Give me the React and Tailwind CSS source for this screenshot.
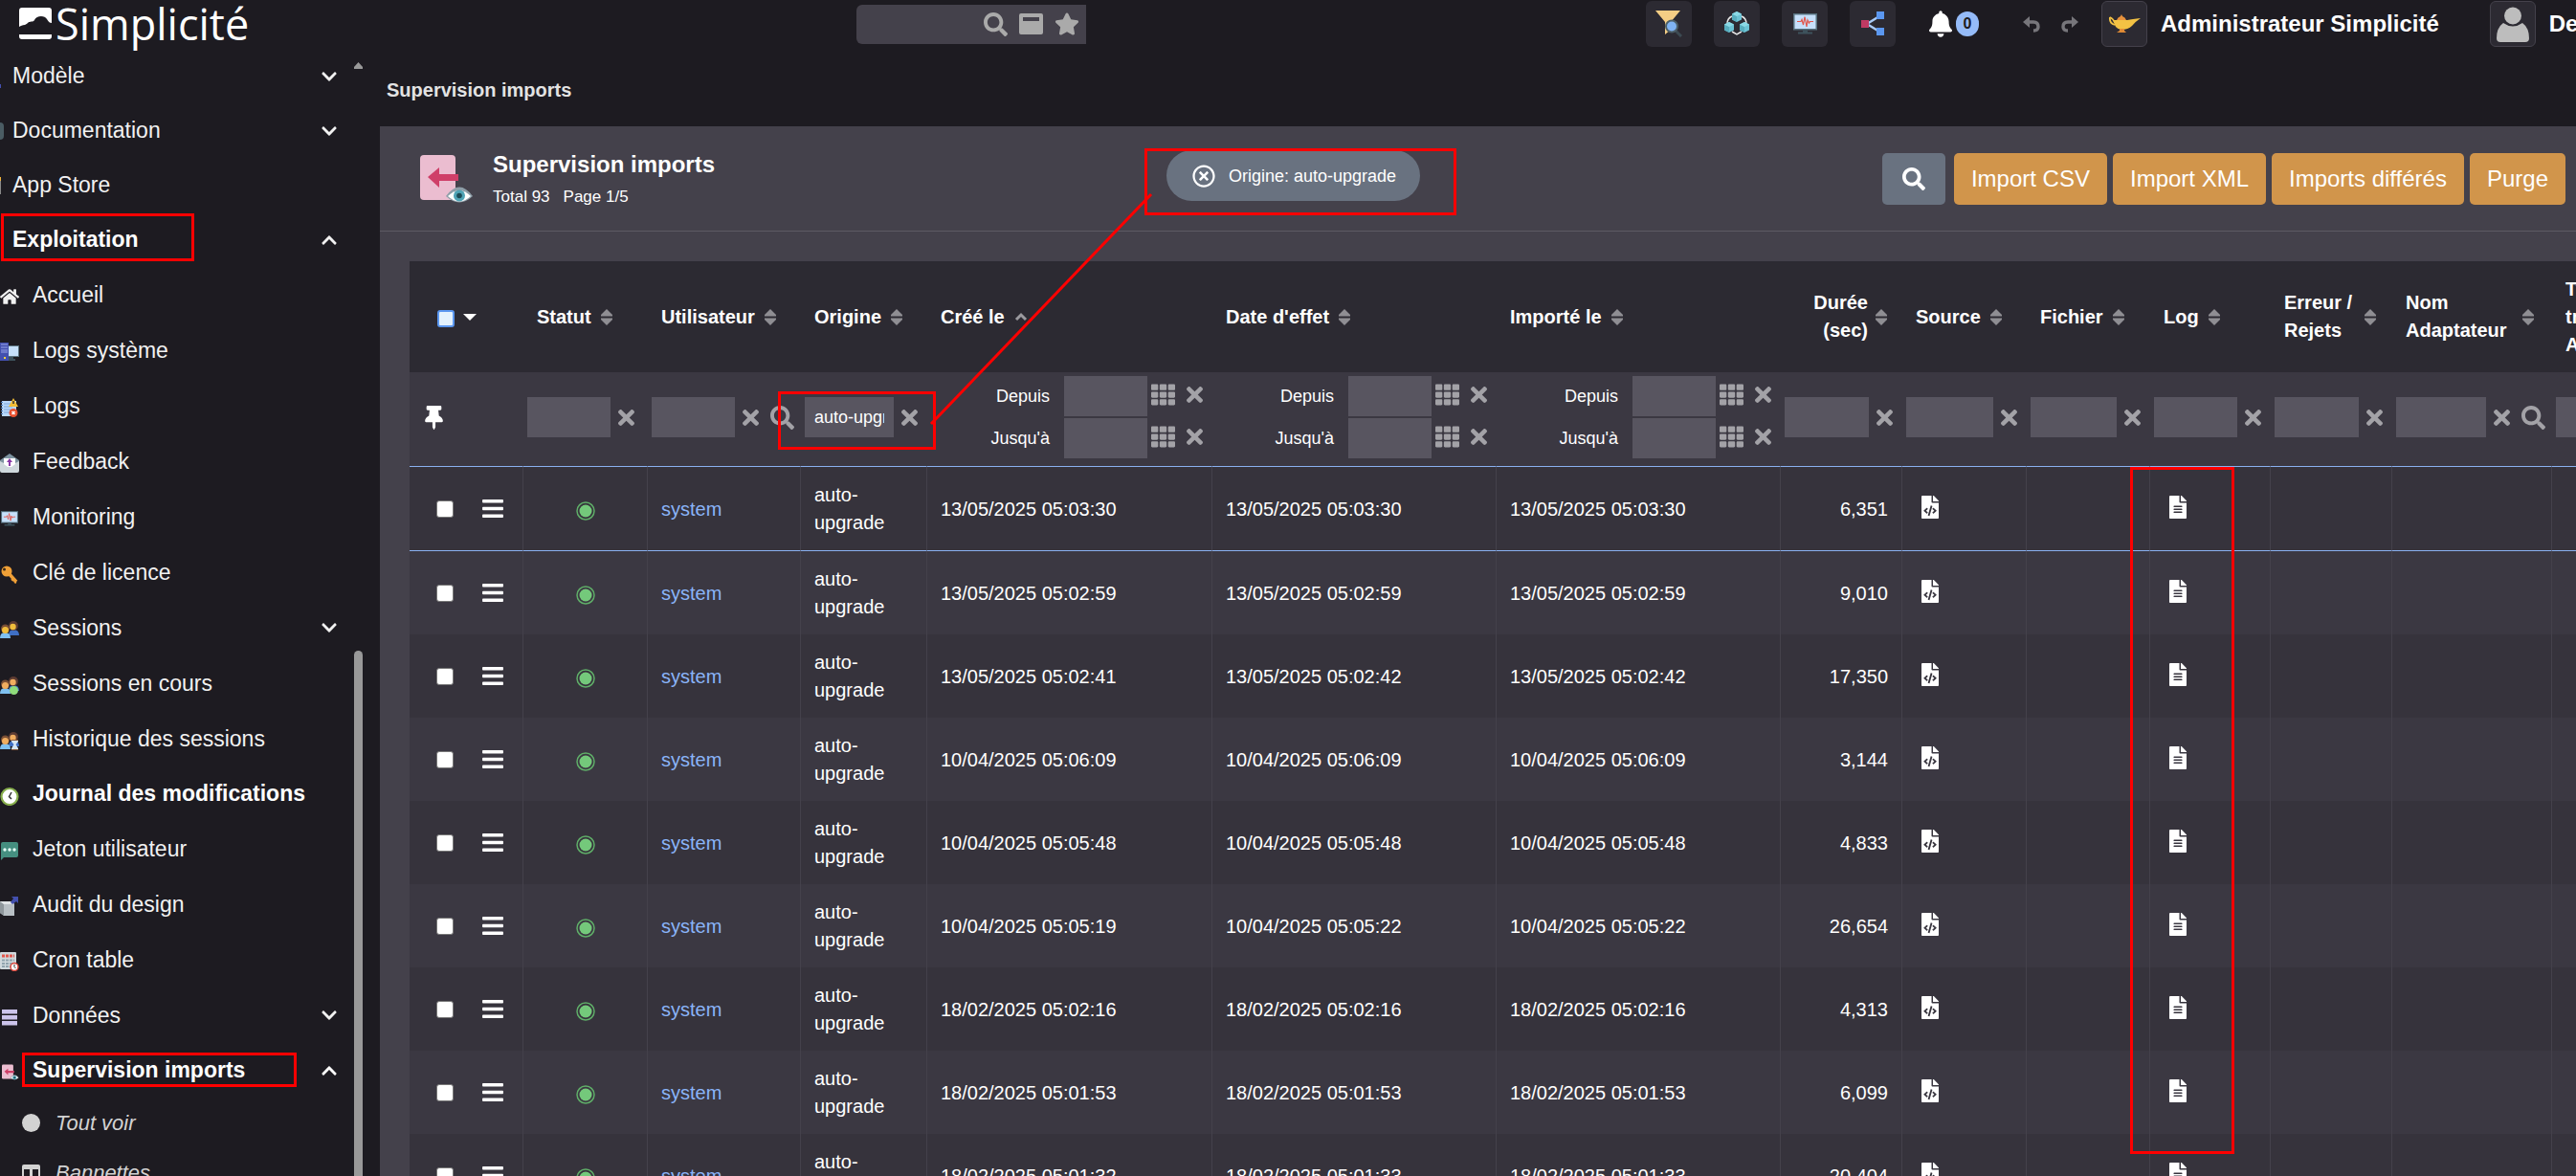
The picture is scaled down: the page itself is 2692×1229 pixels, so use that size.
import React from "react";
import {
  FaBars,
  FaBell,
  FaChevronDown,
  FaChevronUp,
  FaFileAlt,
  FaFileCode,
  FaHome,
  FaRegTimesCircle,
  FaSearch,
  FaStar,
  FaTh,
  FaThumbtack,
  FaTimes,
} from "react-icons/fa";

/* ---------- drawings ---------- */

const LogoMark = () => (
  <svg viewBox="0 0 34 34" className="h-[34px] w-[34px] shrink-0" aria-hidden="true">
    <path
      d="M3 0H31Q34 0 34 3V16C32 16 31 15 29 12C27 8 18 8 16 13C15 15 13 14 11 15C9 15 9 17 6 18C3 18 2 19 0 20V3Q0 0 3 0Z"
      fill="#fff"
    />
    <path d="M0 28H34V30Q34 33 31 33H3Q0 33 0 30Z" fill="#fff" />
  </svg>
);

const WindowIcon = () => (
  <svg viewBox="0 0 25 22" className="h-[22px] w-[25px]" aria-hidden="true">
    <path
      fillRule="evenodd"
      d="M2 0H23Q25 0 25 2V20Q25 22 23 22H2Q0 22 0 20V2Q0 0 2 0ZM4 4V8H21V4Z"
      fill="#aaaaaa"
    />
  </svg>
);

const FunnelIcon = () => (
  <svg viewBox="0 0 28 28" className="h-7 w-7" aria-hidden="true">
    <path d="M0 0H26L16 12V20L10 25V12Z" fill="#f5ce85" />
    <path d="M21 21L27 27" stroke="#3c4a52" strokeWidth="3" />
    <circle cx="17" cy="16.500" r="6" fill="#7fb3f3" stroke="#4c5f68" strokeWidth="2" />
  </svg>
);

const Cube = ({ x, y }) => (
  <g transform={`translate(${x} ${y})`}>
    <path d="M5 0L10 2.500V8.500L5 11L0 8.500V2.500Z" fill="#6cc3d5" />
    <path d="M0 2.500L5 5V11L0 8.500Z" fill="#58aebf" />
    <path d="M5 0L10 2.500L5 5L0 2.500Z" fill="#8bd9e6" />
  </g>
);

const CubesIcon = () => (
  <svg viewBox="0 0 26 26" className="h-[26px] w-[26px]" aria-hidden="true">
    <path
      d="M8 5Q3 7 3 13M18 5Q23 7 23 13M8 21L13 24L18 21"
      fill="none"
      stroke="#e8e8e8"
      strokeWidth="1.500"
    />
    <Cube x={8} y={0} />
    <Cube x={0} y={11} />
    <Cube x={16} y={11} />
  </svg>
);

const MonitorIcon = ({ className }) => (
  <svg viewBox="0 0 25 22" className={className} aria-hidden="true">
    <rect x="0" y="0" width="25" height="17.500" fill="#56707d" />
    <rect x="1.500" y="1.500" width="22" height="14.500" fill="#c6e0fb" />
    <path
      d="M4 8.500H8L9 6.500L10.500 12L12 3.500L14 14L15 7L16.500 10L17.500 8.500H21"
      fill="none"
      stroke="#e2574c"
      strokeWidth="1.200"
    />
    <path d="M10 17.500H15V19.500H20V21.500H5V19.500H10Z" fill="#3d525c" />
  </svg>
);

const ShareIcon = () => (
  <svg viewBox="0 0 26 26" className="h-[26px] w-[26px]" aria-hidden="true">
    <path d="M7 13L20 5M7 13L20 21" stroke="#a9cbf7" strokeWidth="2.500" />
    <rect x="1" y="9" width="8" height="8" fill="#c03a63" />
    <rect x="17" y="0" width="8" height="8" fill="#5b97f0" />
    <rect x="17" y="17" width="8" height="8" fill="#5b97f0" />
  </svg>
);

const UndoArrow = ({ flip }) => (
  <svg
    viewBox="0 0 18 17"
    className={flip ? "h-[17px] w-[18px] -scale-x-100" : "h-[17px] w-[18px]"}
    aria-hidden="true"
  >
    <path d="M5 6H11Q16 6 16 11Q16 15 11 15" fill="none" stroke="#77767b" strokeWidth="3.400" />
    <path d="M0 6L7 0V12Z" fill="#77767b" />
  </svg>
);

const LampIcon = () => (
  <svg viewBox="0 0 34 20" className="h-5 w-[34px]" aria-hidden="true">
    <path d="M2 3Q1 9 7 11" fill="none" stroke="#f3c244" strokeWidth="1.800" />
    <path d="M2 3Q6 5 7 9" fill="none" stroke="#f3c244" strokeWidth="1.500" />
    <path d="M6 6H20Q25 5 34 4Q28 8 25 12Q21 16 14 16Q6 15 6 6Z" fill="#f3c244" />
    <path d="M9 6Q10 3 13 2L14 0L15 2Q18 3 19 6Z" fill="#e8923c" />
    <path d="M12 15H17V17L19 19H9L12 17Z" fill="#e08a35" />
  </svg>
);

const PersonIcon = () => (
  <svg viewBox="0 0 34 37" className="h-[37px] w-[34px]" aria-hidden="true">
    <circle cx="17" cy="9.500" r="9" fill="#bdbdbd" />
    <path d="M7 17Q17 24 27 17Q34 22 34 33Q34 37 30 37H4Q0 37 0 33Q0 22 7 17Z" fill="#bdbdbd" />
  </svg>
);

const ImportEyeIcon = ({ className }) => (
  <svg viewBox="0 0 56 50" className={className} aria-hidden="true">
    <rect x="0" y="0" width="37" height="47" rx="4" fill="#ebbdd0" />
    <path d="M8 23L20 13V20H40V27H20V34Z" fill="#cf3f68" />
    <path d="M27 43Q41 24 55 43Q41 56 27 43Z" fill="#8e9ea8" />
    <path d="M29 43Q41 31 53 43Q41 54 29 43Z" fill="#fff" />
    <circle cx="41" cy="42.500" r="6" fill="#4fa3b5" />
    <circle cx="41" cy="42.500" r="2.800" fill="#1c4a55" />
  </svg>
);

const LogsSystemIcon = () => (
  <svg viewBox="0 0 20 20" className="h-5 w-5" aria-hidden="true">
    <rect x="8" y="3" width="12" height="12" fill="#5b7380" />
    <rect x="9" y="4" width="10" height="10" fill="#c6e0fb" />
    <path d="M12 15H14V17H16V19H9V15Z" fill="#3d525c" />
    <rect x="0" y="0" width="9" height="19" fill="#4350af" />
    <path d="M1 2H8M1 5H8M1 8H8M1 10H8" stroke="#9aa5e8" />
    <rect x="4" y="15" width="2" height="2" fill="#f3d23b" />
  </svg>
);

const LogsIcon = () => (
  <svg viewBox="0 0 20 20" className="h-5 w-5" aria-hidden="true">
    <rect x="2" y="3" width="15" height="16" fill="#b9d8fa" />
    <path d="M4 6H12M4 9H13M4 12H12M4 15H11" stroke="#7fa8dc" />
    <path d="M2 4V18" stroke="#4d7dbb" strokeWidth="2" strokeDasharray="1 2" />
    <path d="M14 0L19 9H9Z" fill="#f2bd36" />
    <path d="M14 3V6" stroke="#333" strokeWidth="1.500" />
    <circle cx="14" cy="15.500" r="4.500" fill="#e6502f" />
    <path d="M12.500 14L15.500 17M15.500 14L12.500 17" stroke="#fff" strokeWidth="1.500" />
  </svg>
);

const FeedbackIcon = () => (
  <svg viewBox="0 0 20 20" className="h-5 w-5" aria-hidden="true">
    <path d="M0 7L10 0L20 7V10H0Z" fill="#7d93a0" />
    <path d="M0 8L4 10V6H16V10L20 8V18Q20 20 18 20H2Q0 20 0 18Z" fill="#cfd8dc" />
    <path d="M4 5H16V11L12 14H8L4 11Z" fill="#fff" />
    <path d="M10 5L13 9H11V13H9V9H7Z" fill="#8a3ba8" />
  </svg>
);

const KeyIcon = () => (
  <svg viewBox="0 0 20 20" className="h-5 w-5" aria-hidden="true">
    <path d="M8 8L17 18" stroke="#f0a037" strokeWidth="3.500" />
    <path d="M12 15L14 17M15 18L17 19" stroke="#f0a037" strokeWidth="2" />
    <circle cx="7" cy="7" r="5.500" fill="#f0a037" />
    <circle cx="4.500" cy="5" r="1.500" fill="#3a2a18" />
  </svg>
);

const PeopleIcon = ({ skin, badge }) => (
  <svg viewBox="0 0 20 20" className="h-5 w-5" aria-hidden="true">
    <path d="M9 16Q9 10 14 10Q20 10 20 16Z" fill="#3f6fc4" />
    <circle cx="14" cy="6" r="5" fill="#5c3b32" />
    <circle cx="13.500" cy="7" r="3.200" fill={skin} />
    <path d="M0 19Q0 13 5 13Q11 13 11 19Z" fill="#7fc0f0" />
    <circle cx="5.500" cy="9" r="4.500" fill="#7a4f35" />
    <circle cx="5.500" cy="10.500" r="3.500" fill={skin} />
    {badge === "online" && <circle cx="14.500" cy="15.500" r="4.500" fill="#8fdc7c" />}
    {badge === "history" && (
      <g>
        <path d="M12 9H19V11L16.500 14L19 18V20H12V18L14.500 14L12 11Z" fill="#d6e6f5" />
        <path d="M12 9.500H19M12 19.500H19" stroke="#8a5a3a" />
      </g>
    )}
  </svg>
);

const ClockIcon = () => (
  <svg viewBox="0 0 20 20" className="h-5 w-5" aria-hidden="true">
    <circle cx="10" cy="10.500" r="8.500" fill="#fff" stroke="#86ad4b" strokeWidth="2.200" />
    <path d="M12 6L9.500 10.500L12 13" fill="none" stroke="#333" strokeWidth="1.500" />
  </svg>
);

const TokenIcon = () => (
  <svg viewBox="0 0 20 20" className="h-5 w-5" aria-hidden="true">
    <path d="M1 3Q1 1 3 1H17Q19 1 19 3V15Q19 17 17 17H4L1 20Z" fill="#458f80" />
    <circle cx="5" cy="9" r="1.700" fill="#e6fff8" />
    <circle cx="10" cy="9" r="1.700" fill="#e6fff8" />
    <circle cx="15" cy="9" r="1.700" fill="#e6fff8" />
  </svg>
);

const AuditIcon = () => (
  <svg viewBox="0 0 20 20" className="h-5 w-5" aria-hidden="true">
    <path d="M0 5H12L15 8V20H4L0 17Z" fill="#b8bfc4" />
    <path d="M0 5L4 8V20L0 17Z" fill="#8f979c" />
    <path d="M0 5H12L15 8H4Z" fill="#dfe3e6" />
    <path d="M12 0H19V7L17 5L13 8L11 6L14 2Z" fill="#4350af" />
  </svg>
);

const CronIcon = () => (
  <svg viewBox="0 0 20 20" className="h-5 w-5" aria-hidden="true">
    <rect x="0" y="0" width="17" height="18" rx="1" fill="#cfd8dc" />
    <path d="M2 4H15" stroke="#e2574c" strokeWidth="3" strokeDasharray="3 1" />
    <path d="M2 8.500H15M2 12H15M2 15H12" stroke="#90a4ae" strokeWidth="2" strokeDasharray="3 1" />
    <circle cx="15" cy="15.500" r="4" fill="#fff" stroke="#d8463b" strokeWidth="1.500" />
    <path d="M15 13V15.500L16.500 17" fill="none" stroke="#333" />
  </svg>
);

const DataIcon = () => (
  <svg viewBox="0 0 20 20" className="h-5 w-5" aria-hidden="true">
    <rect x="2" y="2" width="16" height="4.500" fill="#cbc3ea" />
    <rect x="2" y="8" width="16" height="4.500" fill="#cbc3ea" />
    <rect x="2" y="14" width="16" height="4.500" fill="#cbc3ea" />
  </svg>
);

const TrayIcon = () => (
  <svg viewBox="0 0 19 17" className="h-[17px] w-[19px]" aria-hidden="true">
    <path
      fillRule="evenodd"
      d="M2 0H17Q19 0 19 2V15Q19 17 17 17H2Q0 17 0 15V2Q0 0 2 0ZM2 5V15H8V5ZM11 5V15H17V5Z"
      fill="#d2d2d2"
    />
  </svg>
);

const SortIcon = () => (
  <svg viewBox="0 0 12 17" className="h-[17px] w-3 shrink-0" aria-hidden="true">
    <path d="M6 0L12 6V7.500H0V6Z" fill="#8f8e93" />
    <path d="M0 9.500H12V11L6 17L0 11Z" fill="#8f8e93" />
  </svg>
);

const SortUpIcon = () => (
  <svg viewBox="0 0 14 10" className="h-[10px] w-[14px] shrink-0" aria-hidden="true">
    <path d="M2 8L7 3L12 8" fill="none" stroke="#9b9a9f" strokeWidth="3" />
  </svg>
);

const StatusDot = () => (
  <svg viewBox="0 0 20 20" className="mx-auto mt-1 h-5 w-5" role="img" aria-label="OK">
    <circle cx="10" cy="10" r="9" fill="none" stroke="#5fae68" strokeWidth="1.500" />
    <circle cx="10" cy="10" r="6.500" fill="#74c97b" />
  </svg>
);

/* ---------- header ---------- */

const ToolButton = ({ label, bordered, children }) => (
  <button
    type="button"
    aria-label={label}
    className={
      bordered
        ? "flex h-12 w-12 shrink-0 items-center justify-center rounded-md border border-[#44414b] bg-[#2c2a32]"
        : "flex h-12 w-12 shrink-0 items-center justify-center rounded-md bg-[#2c2a32]"
    }
  >
    {children}
  </button>
);

const Header = () => (
  <header className="flex h-[50px] shrink-0 items-center">
    <a href="#accueil" className="flex w-[397px] shrink-0 items-center pl-5 text-white">
      <LogoMark />
      <span className="pl-1 font-['Open_Sans',sans-serif] text-[45px] leading-[48px]">Simplicité</span>
    </a>
    <div className="grow-[17]" />
    <div className="flex h-[41px] w-60 shrink-0 items-center gap-3 rounded-l-md bg-[#44414b] pr-[7px] text-[#aaaaaa]">
      <input aria-label="Recherche globale" className="min-w-0 flex-1 bg-transparent px-2 text-lg outline-none" />
      <button type="button" aria-label="Rechercher">
        <FaSearch size={25} />
      </button>
      <button type="button" aria-label="Fenêtre">
        <WindowIcon />
      </button>
      <button type="button" aria-label="Favoris">
        <FaStar size={26} />
      </button>
    </div>
    <div className="grow-[20]" />
    <div className="flex w-[972px] shrink-0 items-center overflow-hidden">
      <div className="flex gap-[23px]">
        <ToolButton label="Filtres">
          <FunnelIcon />
        </ToolButton>
        <ToolButton label="Modules">
          <CubesIcon />
        </ToolButton>
        <ToolButton label="Monitoring">
          <MonitorIcon className="h-[22px] w-[25px]" />
        </ToolButton>
        <ToolButton label="Modéliseur">
          <ShareIcon />
        </ToolButton>
      </div>
      <button type="button" className="ml-[35px] flex items-center gap-1">
        <FaBell size={28} className="w-6 text-white" />
        <span className="h-[26px] w-6 rounded-full bg-[#95bbf8] text-center text-base leading-[26px] font-bold text-[#1d1b21]">
          0
        </span>
      </button>
      <button type="button" aria-label="Annuler" className="ml-[46px]">
        <UndoArrow />
      </button>
      <button type="button" aria-label="Rétablir" className="mr-6 ml-[22px]">
        <UndoArrow flip />
      </button>
      <ToolButton label="Administrateur" bordered>
        <LampIcon />
      </ToolButton>
      <span className="ml-[14px] shrink-0 text-2xl font-bold text-white">Administrateur Simplicité</span>
      <div className="w-[53px] shrink-0" />
      <ToolButton label="Profil" bordered>
        <PersonIcon />
      </ToolButton>
      <span className="ml-[14px] shrink-0 text-2xl font-bold text-white">Designer</span>
    </div>
  </header>
);

/* ---------- sidebar ---------- */

const TopItem = ({ label, open, bold, children }) => (
  <li>
    <button
      type="button"
      className={
        bold
          ? "flex h-[57px] w-full items-center justify-between pr-[17px] text-left text-[23px] font-bold text-white"
          : "flex h-[57px] w-full items-center justify-between pr-[17px] text-left text-[23px] text-[#f1f1f1]"
      }
    >
      <span className="flex items-center">
        <span className="flex w-[13px] shrink-0">{children}</span>
        {label}
      </span>
      {open === true && <FaChevronUp size={18} className="text-[#f1f1f1]" />}
      {open === false && <FaChevronDown size={18} className="text-[#f1f1f1]" />}
    </button>
  </li>
);

const SubItem = ({ icon, label, open, bold }) => (
  <li>
    <a
      href="#menu"
      className={
        bold
          ? "flex h-[57px] items-center pr-[17px] text-[23px] font-bold text-white"
          : "flex h-[58px] items-center pr-[17px] text-[23px] text-[#f1f1f1]"
      }
    >
      <span className="flex w-[34px] shrink-0 pt-1">{icon}</span>
      <span className="flex-1 whitespace-nowrap">{label}</span>
      {open === true && <FaChevronUp size={18} />}
      {open === false && <FaChevronDown size={18} />}
    </a>
  </li>
);

const ViewItem = ({ icon, label }) => (
  <li>
    <a href="#vue" className="flex h-[52px] items-center pl-[23px] text-[22px] text-[#d2d2d2] italic">
      <span className="flex w-[35px]">{icon}</span>
      {label}
    </a>
  </li>
);

const Sidebar = () => (
  <aside className="flex w-[397px] shrink-0 overflow-hidden">
    <nav className="w-[370px] shrink-0 pt-px">
      <ul>
        <TopItem label="Modèle" open={false}>
          <span className="mt-5 h-1 w-px bg-[#4350af]" />
        </TopItem>
        <TopItem label="Documentation" open={false}>
          <span className="h-[18px] w-1 rounded-r-sm bg-[#4a5c63]" />
        </TopItem>
        <TopItem label="App Store">
          <span className="h-[18px] w-px border-t-4 border-[#f0b33c] bg-[#8a8a8a]" />
        </TopItem>
        <TopItem label="Exploitation" open bold />
        <SubItem icon={<FaHome size={20} />} label="Accueil" />
        <SubItem icon={<LogsSystemIcon />} label="Logs système" />
        <SubItem icon={<LogsIcon />} label="Logs" />
        <SubItem icon={<FeedbackIcon />} label="Feedback" />
        <SubItem icon={<MonitorIcon className="ml-px h-4 w-[18px]" />} label="Monitoring" />
        <SubItem icon={<KeyIcon />} label="Clé de licence" />
        <SubItem icon={<PeopleIcon skin="#f0bd3c" />} label="Sessions" open={false} />
        <SubItem icon={<PeopleIcon skin="#f0ad5f" badge="online" />} label="Sessions en cours" />
        <SubItem icon={<PeopleIcon skin="#f0ad5f" badge="history" />} label="Historique des sessions" />
        <SubItem icon={<ClockIcon />} label="Journal des modifications" bold />
        <SubItem icon={<TokenIcon />} label="Jeton utilisateur" />
        <SubItem icon={<AuditIcon />} label="Audit du design" />
        <SubItem icon={<CronIcon />} label="Cron table" />
        <SubItem icon={<DataIcon />} label="Données" open={false} />
        <SubItem icon={<ImportEyeIcon className="ml-[2px] h-[17px] w-[18px]" />} label="Supervision imports" open bold />
        <ViewItem icon={<span className="h-[19px] w-[19px] rounded-full bg-[#d2d2d2]" />} label="Tout voir" />
        <ViewItem icon={<TrayIcon />} label="Bannettes" />
      </ul>
    </nav>
    <div className="flex w-[9px] flex-col pt-[15px]" aria-hidden="true">
      <svg viewBox="0 0 9 7" className="h-[7px] w-[9px]">
        <path d="M4.500 0L9 5V7H0V5Z" fill="#999999" />
      </svg>
      <div className="h-[608px] shrink-0" />
      <div className="flex-1 rounded-t-full bg-[#999999]" />
    </div>
  </aside>
);

/* ---------- list ---------- */

const TitleBar = () => (
  <div className="flex h-[110px] shrink-0 items-center border-b border-[#5d5a63] pr-[11px] pl-[42px]">
    <div className="flex min-w-0 flex-[21] items-center gap-5">
      <ImportEyeIcon className="h-[50px] w-14 shrink-0" />
      <div className="pt-[2px] text-white">
        <h1 className="text-2xl leading-8 font-bold">Supervision imports</h1>
        <p className="flex gap-[14px] pt-1 text-[17px] leading-7">
          <span>Total 93</span>
          <span>Page 1/5</span>
        </p>
      </div>
    </div>
    <button
      type="button"
      className="mb-[6px] flex h-[53px] shrink-0 items-center gap-[14px] rounded-full bg-[#697280] pr-[25px] pl-[27px] text-lg whitespace-nowrap text-white"
    >
      <FaRegTimesCircle size={24} />
      Origine: auto-upgrade
    </button>
    <div className="flex-[13]" />
    <div className="flex shrink-0 gap-[6px] text-2xl text-white">
      <button
        type="button"
        aria-label="Rechercher"
        className="mr-[3px] flex h-[54px] w-[66px] items-center justify-center rounded-[5px] bg-[#697280]"
      >
        <FaSearch size={24} />
      </button>
      <button type="button" className="h-[54px] rounded-[5px] bg-[#d1954b] px-[18px]">
        Import CSV
      </button>
      <button type="button" className="h-[54px] rounded-[5px] bg-[#d1954b] px-[18px]">
        Import XML
      </button>
      <button type="button" className="h-[54px] rounded-[5px] bg-[#d1954b] px-[18px]">
        Imports différés
      </button>
      <button type="button" className="h-[54px] rounded-[5px] bg-[#d1954b] px-[18px]">
        Purge
      </button>
    </div>
  </div>
);

const HeadCell = ({ children, sorted, right, textClass = "" }) => (
  <th className="h-[116px] pr-4 pl-[14px] font-bold" scope="col">
    <button
      type="button"
      className={
        right
          ? "ml-auto flex items-center gap-2 text-right leading-[29px]"
          : "flex items-center gap-[10px] text-left leading-[29px]"
      }
    >
      <span className={textClass}>{children}</span>
      {sorted ? <SortUpIcon /> : <SortIcon />}
    </button>
  </th>
);

const ClearButton = () => (
  <button type="button" aria-label="Effacer" className="shrink-0">
    <FaTimes className="h-[25px] w-[17px]" />
  </button>
);

const FilterCell = ({ label, value, lookup, wide }) => (
  <td className={wide ? "pr-[14px] pb-1 pl-1" : lookup ? "pr-[7px] pb-1 pl-1" : "pr-[10px] pb-1 pl-1"}>
    <div className="flex items-center gap-2">
      <input
        aria-label={label}
        defaultValue={value}
        className="h-[42px] min-w-0 flex-1 bg-[#585560] px-[10px] text-lg text-white outline-none"
      />
      <ClearButton />
      {lookup && (
        <button type="button" aria-label={`Rechercher ${label}`} className="ml-1 shrink-0">
          <FaSearch size={25} />
        </button>
      )}
    </div>
  </td>
);

const DateField = ({ id, label }) => (
  <div className="flex items-center justify-end">
    <label htmlFor={id} className="pr-[15px] text-lg text-white">
      {label}
    </label>
    <input id={id} className="h-[42px] w-[87px] bg-[#585560] px-2 text-lg text-white outline-none" />
    <button type="button" aria-label="Calendrier" className="mr-3 mb-1 ml-1">
      <FaTh size={25} />
    </button>
    <span className="mb-1 flex">
      <ClearButton />
    </span>
  </div>
);

const DateFilterCell = ({ id }) => (
  <td className="pr-[10px]">
    <div className="flex flex-col gap-[2px] pb-1">
      <DateField id={`${id}-depuis`} label="Depuis" />
      <DateField id={`${id}-jusqua`} label="Jusqu'à" />
    </div>
  </td>
);

const rows = [
  ["13/05/2025 05:03:30", "13/05/2025 05:03:30", "13/05/2025 05:03:30", "6,351"],
  ["13/05/2025 05:02:59", "13/05/2025 05:02:59", "13/05/2025 05:02:59", "9,010"],
  ["13/05/2025 05:02:41", "13/05/2025 05:02:42", "13/05/2025 05:02:42", "17,350"],
  ["10/04/2025 05:06:09", "10/04/2025 05:06:09", "10/04/2025 05:06:09", "3,144"],
  ["10/04/2025 05:05:48", "10/04/2025 05:05:48", "10/04/2025 05:05:48", "4,833"],
  ["10/04/2025 05:05:19", "10/04/2025 05:05:22", "10/04/2025 05:05:22", "26,654"],
  ["18/02/2025 05:02:16", "18/02/2025 05:02:16", "18/02/2025 05:02:16", "4,313"],
  ["18/02/2025 05:01:53", "18/02/2025 05:01:53", "18/02/2025 05:01:53", "6,099"],
  ["18/02/2025 05:01:32", "18/02/2025 05:01:33", "18/02/2025 05:01:33", "20,404"],
];

const Cell = ({ first, className = "", children }) => (
  <td
    className={`border-r border-r-[#44414b] ${
      first ? "h-[89px] border-y border-y-[#8ab0f0]" : "h-[87px]"
    } ${className}`}
  >
    {children}
  </td>
);

const Row = ({ data, index }) => {
  const first = index === 0;
  return (
    <tr className={index % 2 === 0 ? "bg-[#36333c]" : "bg-[#3b3842]"}>
      <Cell first={first}>
        <div className="flex items-center pl-7">
          <input
            type="checkbox"
            aria-label={`Sélectionner la ligne ${index + 1}`}
            className="mr-[30px] h-[18px] w-[18px] appearance-none rounded-[3px] border border-[#777777] bg-white"
          />
          <button type="button" aria-label="Actions">
            <FaBars className="h-[25px] w-[22px]" />
          </button>
        </div>
      </Cell>
      <Cell first={first}>
        <StatusDot />
      </Cell>
      <Cell first={first} className="pl-[14px]">
        <a href="#system" className="text-[#8ab4f8]">
          system
        </a>
      </Cell>
      <Cell first={first} className="pr-[14px] pl-[14px] leading-[29px]">
        auto-
        <br />
        upgrade
      </Cell>
      <Cell first={first} className="pl-[14px]">
        {data[0]}
      </Cell>
      <Cell first={first} className="pl-[14px]">
        {data[1]}
      </Cell>
      <Cell first={first} className="pl-[14px]">
        {data[2]}
      </Cell>
      <Cell first={first} className="pr-[14px] text-right">
        {data[3]}
      </Cell>
      <Cell first={first} className="pl-5">
        <button type="button" aria-label="Source XML" className="flex pb-1">
          <FaFileCode size={24} className="w-[18px]" />
        </button>
      </Cell>
      <Cell first={first} />
      <Cell first={first} className="pl-5">
        <button type="button" aria-label="Fichier log" className="flex pb-1">
          <FaFileAlt size={24} className="w-[18px]" />
        </button>
      </Cell>
      <Cell first={first} />
      <Cell first={first} />
      <Cell first={first} />
    </tr>
  );
};

const ListTable = () => (
  <div className="mt-[31px] ml-[31px] flex-1 overflow-hidden">
    <table className="w-[2359px] table-fixed border-separate border-spacing-0 text-xl text-white">
      <colgroup>
        <col className="w-[119px]" />
        <col className="w-[130px]" />
        <col className="w-[160px]" />
        <col className="w-[132px]" />
        <col className="w-[298px]" />
        <col className="w-[297px]" />
        <col className="w-[297px]" />
        <col className="w-[127px]" />
        <col className="w-[130px]" />
        <col className="w-[129px]" />
        <col className="w-[126px]" />
        <col className="w-[127px]" />
        <col className="w-[167px]" />
        <col className="w-[120px]" />
      </colgroup>
      <thead>
        <tr className="bg-[#2c2a32]">
          <th className="h-[116px]" scope="col">
            <div className="flex items-center gap-[9px] pl-[29px]">
              <input
                type="checkbox"
                aria-label="Tout sélectionner"
                className="mt-1 h-[18px] w-[18px] appearance-none rounded-[3px] border-2 border-[#5b97f0] bg-[#e4f2fd]"
              />
              <button type="button" aria-label="Options de sélection">
                <svg viewBox="0 0 14 7" className="h-[7px] w-[14px]" aria-hidden="true">
                  <path d="M0 0H14L7 7Z" fill="#fff" />
                </svg>
              </button>
            </div>
          </th>
          <HeadCell>Statut</HeadCell>
          <HeadCell>Utilisateur</HeadCell>
          <HeadCell>Origine</HeadCell>
          <HeadCell sorted>Créé le</HeadCell>
          <HeadCell>Date d'effet</HeadCell>
          <HeadCell>Importé le</HeadCell>
          <HeadCell right>
            Durée
            <br />
            (sec)
          </HeadCell>
          <HeadCell>Source</HeadCell>
          <HeadCell>Fichier</HeadCell>
          <HeadCell>Log</HeadCell>
          <HeadCell textClass="w-[74px]">
            Erreur /
            <br />
            Rejets
          </HeadCell>
          <HeadCell textClass="w-28">
            Nom
            <br />
            Adaptateur
          </HeadCell>
          <HeadCell>
            Type
            <br />
            traitement
            <br />
            Adaptateur
          </HeadCell>
        </tr>
        <tr className="h-[98px] bg-[#3b3842] font-normal text-[#a3a2a7]">
          <td className="pb-1 pl-4">
            <button type="button" aria-label="Épingler" className="flex text-white">
              <FaThumbtack size={25} className="w-[19px]" />
            </button>
          </td>
          <FilterCell label="Statut" wide />
          <FilterCell label="Utilisateur" lookup />
          <FilterCell label="Origine" value="auto-upgrade" />
          <DateFilterCell id="cree" />
          <DateFilterCell id="effet" />
          <DateFilterCell id="importe" />
          <FilterCell label="Durée" />
          <FilterCell label="Source" />
          <FilterCell label="Fichier" />
          <FilterCell label="Log" />
          <FilterCell label="Erreur / Rejets" />
          <FilterCell label="Nom Adaptateur" lookup />
          <FilterCell label="Type traitement Adaptateur" />
        </tr>
      </thead>
      <tbody>
        {rows.map((data, index) => (
          <Row key={data[0]} data={data} index={index} />
        ))}
      </tbody>
    </table>
  </div>
);

/* Red markers laid over the page */
const Annotations = () => (
  <svg
    className="pointer-events-none absolute top-0 left-0 h-[1229px] w-[2692px]"
    viewBox="0 0 2692 1229"
    fill="none"
    stroke="#ff0000"
    strokeWidth="3"
    aria-hidden="true"
  >
    <rect x="2.500" y="224.500" width="199" height="47" />
    <rect x="24.500" y="1101.500" width="284" height="33" />
    <rect x="1197.500" y="156.500" width="323" height="67" />
    <rect x="814.500" y="410.500" width="162" height="58" />
    <rect x="2227.500" y="489.500" width="106" height="715" />
    <path d="M1203 203L973 443" />
  </svg>
);

export default function App() {
  return (
    <div className="relative flex h-screen flex-col overflow-hidden bg-[#1d1b21] font-['Liberation_Sans',Arial,sans-serif]">
      <Header />
      <div className="flex min-h-0 flex-1">
        <Sidebar />
        <main className="flex min-w-0 flex-1 flex-col">
          <div className="flex h-[82px] shrink-0 items-center pt-[6px] pl-[7px] text-xl font-bold text-[#e3e3e3]">
            Supervision imports
          </div>
          <section className="flex min-h-0 flex-1 flex-col bg-[#44414b]">
            <TitleBar />
            <ListTable />
          </section>
        </main>
      </div>
      <Annotations />
    </div>
  );
}
